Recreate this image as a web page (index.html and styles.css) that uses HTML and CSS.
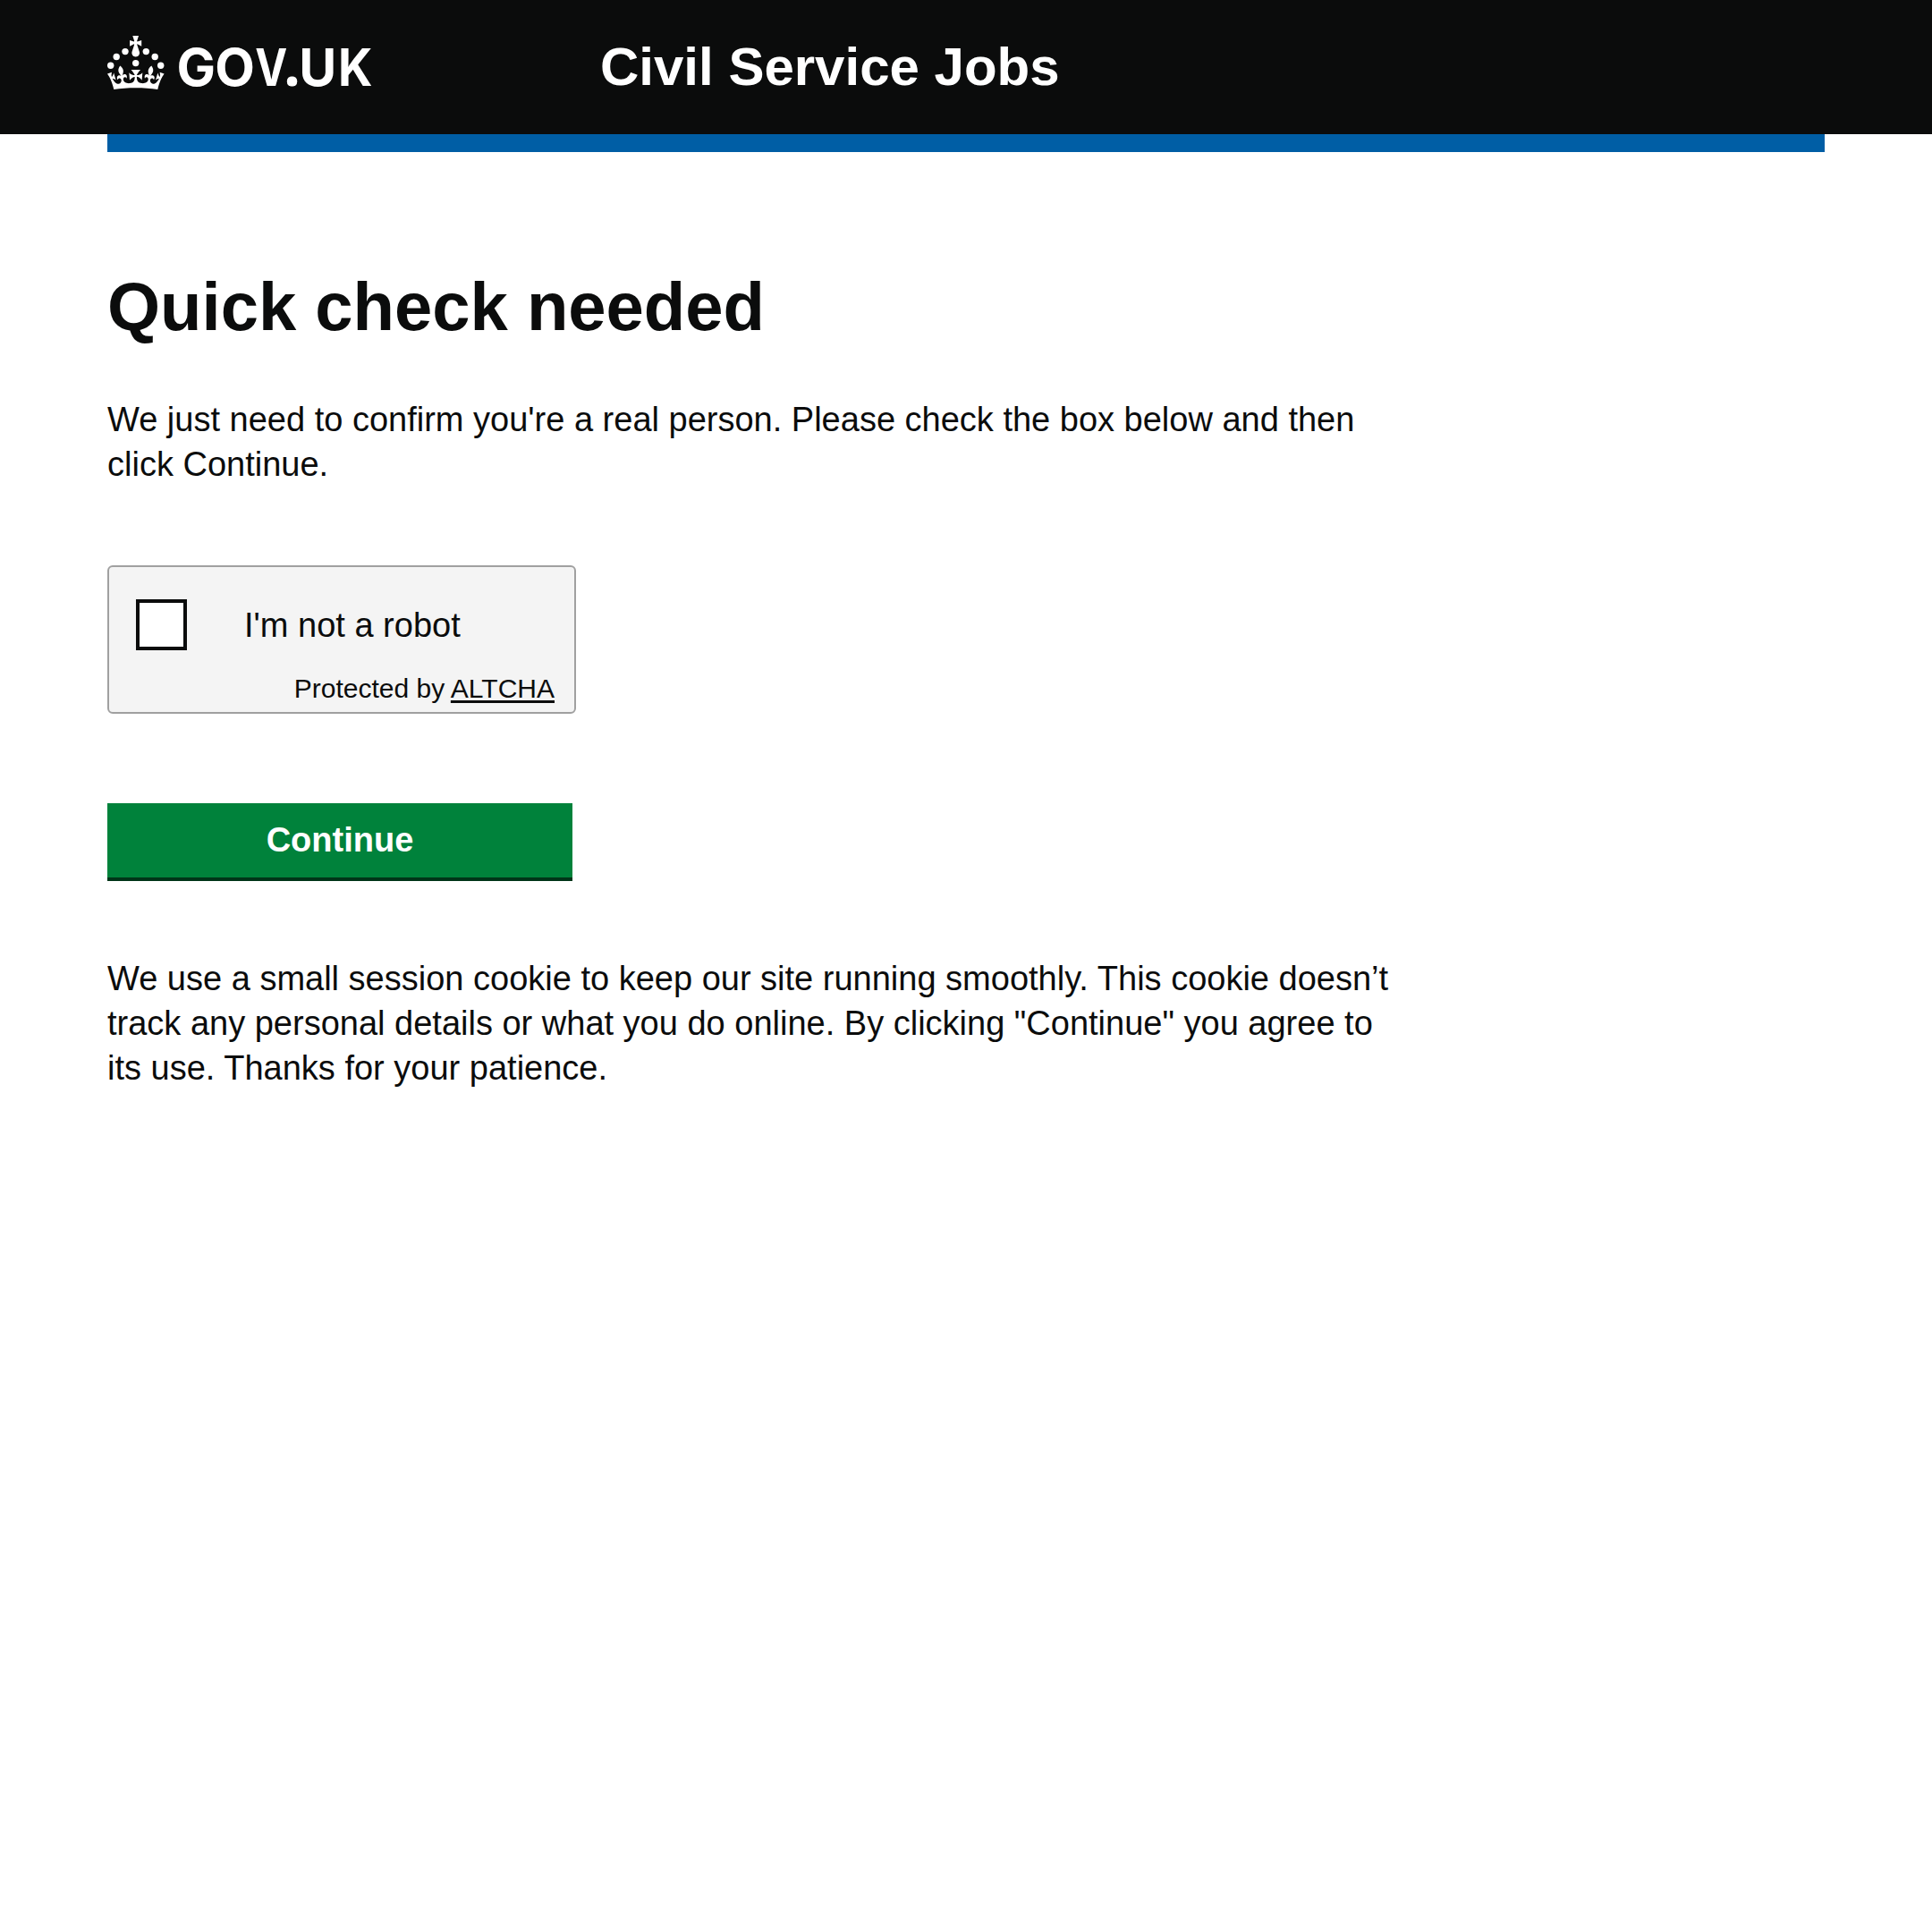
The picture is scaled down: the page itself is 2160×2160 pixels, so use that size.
FILE: index.html
```html
<!DOCTYPE html>
<html lang="en">
<head>
<meta charset="utf-8">
<title>Quick check needed - Civil Service Jobs</title>
<link rel="stylesheet" href="styles.css">
</head>
<body>
<header class="header">
  <div class="header-inner">
    <a class="logo" href="#">
      <svg class="logo-svg" viewBox="0 0 324 60" width="324" height="60" fill="currentColor" role="img" aria-label="GOV.UK">
        <circle cx="20" cy="17.6" r="3.7"/>
        <circle cx="10.2" cy="23.5" r="3.7"/>
        <circle cx="3.7" cy="33.2" r="3.7"/>
        <circle cx="31.7" cy="30.6" r="3.7"/>
        <circle cx="43.3" cy="17.6" r="3.7"/>
        <circle cx="53.2" cy="23.5" r="3.7"/>
        <circle cx="59.7" cy="33.2" r="3.7"/>
        <path d="M33.1,9.8c.2-.1.3-.3.5-.5l4.6,2.4v-6.8l-4.6,1.5c-.1-.2-.3-.3-.5-.5l1.9-5.9h-6.7l1.9,5.9c-.2.1-.3.3-.5.5l-4.6-1.5v6.8l4.6-2.4c.1.2.3.3.5.5l-2.6,8c-.9,2.8,1.2,5.7,4.1,5.7h0c3,0,5.1-2.9,4.1-5.7l-2.6-8ZM37,37.9s-3.4,3.8-4.1,6.1c2.2,0,4.2-.5,6.4-2.8l-.7,8.5c-2-2.8-4.4-4.1-5.7-3.8.1,3.1.5,6.7,5.8,7.2,3.7.3,6.7-1.5,7-3.8.4-2.6-2-4.3-3.7-1.6-1.4-4.5,2.4-6.1,4.9-3.2-1.9-4.5-1.8-7.7,2.4-10.9,3,4,2.6,7.3-1.2,11.1,2.4-1.3,6.2,0,4,4.6-1.2-2.8-3.7-2.2-4.2.2-.3,1.7.7,3.7,3,4.2,1.9.3,4.7-.9,7-5.9-1.3,0-2.4.7-3.9,1.7l2.4-8c.6,2.3,1.4,3.7,2.2,4.5.6-1.6.5-2.8,0-5.3l5,1.8c-2.6,3.6-5.2,8.7-7.3,17.5-7.4-1.1-15.7-1.7-24.5-1.7h0c-8.8,0-17.1.6-24.5,1.7-2.1-8.9-4.7-13.9-7.3-17.5l5-1.8c-.5,2.5-.6,3.7,0,5.3.8-.8,1.6-2.3,2.2-4.5l2.4,8c-1.5-1-2.6-1.7-3.9-1.7,2.3,5,5.2,6.2,7,5.9,2.3-.4,3.3-2.4,3-4.2-.5-2.4-3-3.1-4.2-.2-2.2-4.6,1.6-6,4-4.6-3.7-3.7-4.2-7.1-1.2-11.1,4.2,3.2,4.3,6.4,2.4,10.9,2.5-2.8,6.3-1.3,4.9,3.2-1.8-2.7-4.1-1-3.7,1.6.3,2.3,3.3,4.1,7,3.8,5.4-.5,5.7-4.2,5.8-7.2-1.3-.2-3.7,1-5.7,3.8l-.7-8.5c2.2,2.3,4.2,2.7,6.4,2.8-.7-2.3-4.1-6.1-4.1-6.1h10.6,0Z"/>
        <text class="logo-text" y="56" x="77.5 120.2">GO<tspan x="165.2" textLength="36" lengthAdjust="spacingAndGlyphs">V</tspan><tspan class="logo-dot" x="197.2">.</tspan><tspan x="214.3" textLength="42" lengthAdjust="spacingAndGlyphs">U</tspan><tspan x="258" textLength="38.5" lengthAdjust="spacingAndGlyphs">K</tspan></text>
      </svg>
    </a>
    <a class="service" href="#">Civil Service Jobs</a>
  </div>
</header>
<div class="container">
  <div class="bar"></div>
  <main class="main">
    <h1 class="heading">Quick check needed</h1>
    <p class="body">We just need to confirm you're a real person. Please check the box below and then click Continue.</p>
    <form class="form">
      <div class="captcha">
        <label class="captcha-main"><input class="captcha-box" type="checkbox"><span>I'm not a robot</span></label>
        <div class="captcha-footer">Protected by <a class="captcha-link" href="#">ALTCHA</a></div>
      </div>
      <button class="button" type="button">Continue</button>
    </form>
    <p class="body">We use a small session cookie to keep our site running smoothly. This cookie doesn’t track any personal details or what you do online. By clicking "Continue" you agree to its use. Thanks for your patience.</p>
  </main>
</div>
</body>
</html>
```

FILE: styles.css
```css
* { box-sizing: border-box; }
body {
  margin: 0;
  background: #fff;
  color: #0b0c0c;
  font-family: "Liberation Sans", Arial, sans-serif;
  font-size: 38px;
  line-height: 50px;
}
.header { height: 150px; background: #0b0c0c; color: #fff; }
.header-inner {
  display: flex;
  align-items: flex-start;
  margin: 0 120px;
  padding-top: 40px;
}
.logo { display: block; width: 551px; color: #fff; }
.logo-svg { display: block; overflow: visible; }
.logo-text { font-family: Inter, sans-serif; font-weight: 700; font-size: 58px; }
.logo-dot { font-family: "Noto Sans", sans-serif; font-size: 66px; }
.service {
  padding-top: 2px;
  color: #fff;
  font-size: 60px;
  font-weight: 700;
  line-height: 66px;
  text-decoration: none;
}
.container { margin: 0 120px; }
.bar { height: 20px; background: #005ea5; }
.main { width: 1440px; padding-top: 133px; }
.heading { margin: 0 0 61px; font-size: 76px; line-height: 80px; font-weight: 700; }
.body { margin: 0; }
.form { margin: 88px 0; }
.captcha {
  width: 524px;
  height: 166px;
  padding: 36px 22px 0 30px;
  border: 2px solid #a0a0a0;
  border-radius: 6px;
  background: #f4f4f4;
}
.captcha-main { display: flex; align-items: center; gap: 64px; height: 57px; }
.captcha-box {
  appearance: none;
  width: 57px;
  height: 57px;
  margin: 0;
  border: 4px solid #0b0c0c;
  background: #fff;
}
.captcha-footer {
  margin-top: 25px;
  font-size: 30px;
  line-height: 36px;
  text-align: right;
}
.captcha-link {
  color: inherit;
  text-decoration-thickness: 3px;
  text-underline-offset: 3px;
  text-decoration-skip-ink: none;
}
.button {
  display: block;
  width: 520px;
  height: 83px;
  margin: 100px 0 0;
  padding: 0;
  border: 0;
  background: #00823b;
  box-shadow: 0 4px 0 #003418;
  color: #fff;
  font: 700 38px/83px "Liberation Sans", Arial, sans-serif;
}
```
